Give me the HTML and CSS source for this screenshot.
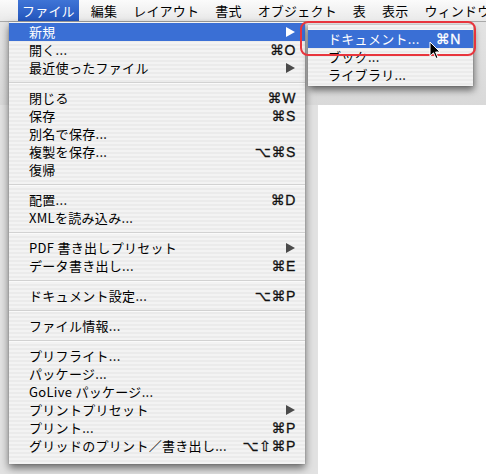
FILE: index.html
```html
<!DOCTYPE html>
<html lang="ja">
<head>
<meta charset="utf-8">
<title>ファイル メニュー</title>
<link rel="stylesheet" href="styles.css">
</head>
<body>
<div class="screen">
  <div class="menubar">
    <span class="mb-item active">ファイル</span>
    <span class="mb-item">編集</span>
    <span class="mb-item">レイアウト</span>
    <span class="mb-item">書式</span>
    <span class="mb-item">オブジェクト</span>
    <span class="mb-item">表</span>
    <span class="mb-item">表示</span>
    <span class="mb-item">ウィンドウ</span>
  </div>
  <div class="desk">
    <div class="toolbar"></div>
    <div class="desk-body">
      <div class="frame"></div>
      <div class="doc"></div>
    </div>

    <div class="menu main">
      <div class="item hl"><span class="label">新規</span><span class="arrow"></span></div>
      <div class="item"><span class="label">開く...</span><span class="key">⌘O</span></div>
      <div class="item"><span class="label">最近使ったファイル</span><span class="arrow"></span></div>
      <div class="sep"></div>
      <div class="item"><span class="label">閉じる</span><span class="key">⌘W</span></div>
      <div class="item"><span class="label">保存</span><span class="key">⌘S</span></div>
      <div class="item"><span class="label">別名で保存...</span></div>
      <div class="item"><span class="label">複製を保存...</span><span class="key">⌥⌘S</span></div>
      <div class="item"><span class="label">復帰</span></div>
      <div class="sep"></div>
      <div class="item"><span class="label">配置...</span><span class="key">⌘D</span></div>
      <div class="item"><span class="label">XMLを読み込み...</span></div>
      <div class="sep"></div>
      <div class="item"><span class="label">PDF 書き出しプリセット</span><span class="arrow"></span></div>
      <div class="item"><span class="label">データ書き出し...</span><span class="key">⌘E</span></div>
      <div class="sep"></div>
      <div class="item"><span class="label">ドキュメント設定...</span><span class="key">⌥⌘P</span></div>
      <div class="sep"></div>
      <div class="item"><span class="label">ファイル情報...</span></div>
      <div class="sep"></div>
      <div class="item"><span class="label">プリフライト...</span></div>
      <div class="item"><span class="label">パッケージ...</span></div>
      <div class="item"><span class="label">GoLive パッケージ...</span></div>
      <div class="item"><span class="label">プリントプリセット</span><span class="arrow"></span></div>
      <div class="item"><span class="label">プリント...</span><span class="key">⌘P</span></div>
      <div class="item"><span class="label">グリッドのプリント／書き出し...</span><span class="key">⌥⇧⌘P</span></div>
    </div>

    <div class="menu sub">
      <div class="item hl"><span class="label">ドキュメント...</span><span class="key">⌘N</span></div>
      <div class="item"><span class="label">ブック...</span></div>
      <div class="item"><span class="label">ライブラリ...</span></div>
    </div>

    <div class="callout"></div>

    <svg class="cursor" width="12" height="19" viewBox="0 0 12 19" aria-hidden="true">
      <path d="M1 1 L1 15 L4.5 11.8 L7 17.5 L9 16.6 L6.6 11 L11 11 Z" fill="#000" stroke="#fff" stroke-width="1" stroke-linejoin="round"/>
    </svg>
  </div>
</div>
</body>
</html>
```

FILE: styles.css
```css
* { box-sizing: border-box; }
html, body { margin: 0; padding: 0; }
body {
  width: 486px;
  height: 474px;
  overflow: hidden;
  background: #ececec;
  font-family: "Noto Sans CJK JP", "Noto Sans", sans-serif;
  color: #000;
}
.screen {
  width: 486px;
  height: 474px;
  display: flex;
  flex-direction: column;
}
.menubar {
  height: 22px;
  flex: none;
  display: flex;
  align-items: stretch;
  gap: 8px;
  padding-left: 18px;
  background: linear-gradient(#fbfbfb, #e9e9e9);
  border-bottom: 1px solid #a9a9a9;
  font-size: 13px;
  line-height: 21px;
  white-space: nowrap;
}
.mb-item {
  padding: 0 4px;
  letter-spacing: 0.2px;
}
.mb-item.active {
  color: #fff;
  background: linear-gradient(#3f74d6, #2456bd);
}
.desk {
  position: relative;
  flex: 1;
  display: flex;
  flex-direction: column;
}
.toolbar {
  height: 83px;
  flex: none;
  background: linear-gradient(#e4e4e4, #d9d9d9);
}
.desk-body {
  flex: 1;
  display: flex;
}
.frame {
  width: 318px;
  flex: none;
  background: #e2e2e2;
}
.doc {
  flex: 1;
  background: #ffffff;
}

/* menus */
.menu {
  position: absolute;
  font-size: 13px;
  white-space: nowrap;
  background: repeating-linear-gradient(to bottom, #f3f3f3 0 2px, #ebebeb 2px 4px);
}
.menu.main {
  left: 9px;
  top: 0;
  width: 296px;
  padding: 1px 0 9px;
  box-shadow: 0 4px 8px rgba(0, 0, 0, 0.55), 0 0 1px rgba(0,0,0,0.3);
}
.menu.sub {
  left: 308px;
  top: 3px;
  width: 165px;
  padding: 5px 0 2px;
  box-shadow: 1px 4px 7px rgba(0, 0, 0, 0.55), 0 0 1px rgba(0,0,0,0.3);
}
.item {
  height: 18px;
  display: flex;
  align-items: center;
  justify-content: space-between;
  padding: 0 9px 0 20px;
  line-height: 18px;
}
.menu.sub .item {
  padding: 0 12px 0 20px;
}
.item.hl {
  background: #3a6fd5;
  color: #fff;
}
.label { letter-spacing: 0.3px; }
.key {
  font-family: "Liberation Sans", "DejaVu Sans", sans-serif;
  font-size: 14px;
  letter-spacing: 0.6px;
  color: #111;
  -webkit-text-stroke: 0.3px #111;
}
.item.hl .key { color: #fff; -webkit-text-stroke-color: #fff; }
.arrow {
  width: 0;
  height: 0;
  margin-right: 1px;
  border-top: 5px solid transparent;
  border-bottom: 5px solid transparent;
  border-left: 9px solid #4a4a4a;
}
.item.hl .arrow { border-left-color: #fff; }
.sep {
  height: 12px;
  display: flex;
  flex-direction: column;
  justify-content: center;
}
.sep::before {
  content: "";
  display: block;
  height: 1px;
  background: #d2d2d2;
  border-bottom: 1px solid #fafafa;
  box-sizing: content-box;
}

/* annotation */
.callout {
  position: absolute;
  left: 300px;
  top: -1px;
  width: 176px;
  height: 35px;
  border: 2px solid #e8353d;
  border-radius: 8px;
}
.cursor {
  position: absolute;
  left: 429px;
  top: 19px;
}
```
